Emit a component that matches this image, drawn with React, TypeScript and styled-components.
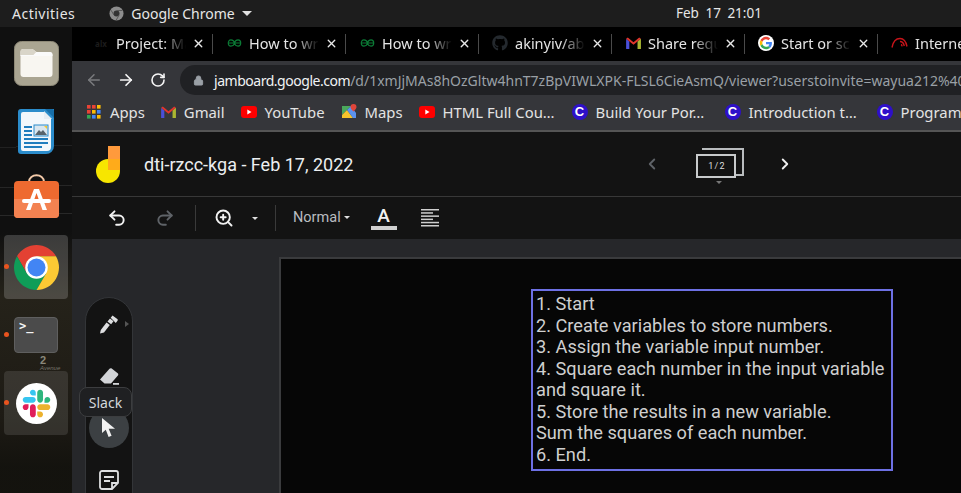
import React from "react";
import styled, { createGlobalStyle } from "styled-components";
import { X, ArrowLeft, ArrowRight, RotateCw, Lock, Undo2, Redo2, ZoomIn, ChevronLeft, ChevronRight } from "lucide-react";
import { FaGithub } from "react-icons/fa";

const Global = createGlobalStyle`
  html, body, #root { margin: 0; height: 100%; overflow: hidden; background: #000; }
  * { box-sizing: border-box; }
`;

const Screen = styled.div`
  display: flex; flex-direction: column; width: 100%; height: 100vh; overflow: hidden;
  font-family: "Noto Sans", "Open Sans", sans-serif;
`;
const TopBar = styled.header`
  flex: 0 0 27px; display: flex; align-items: center; background: #1d1d1d; color: #e6e6e6; font-size: 14px;
  padding-left: 12px; position: relative;
`;
const Activities = styled.span`letter-spacing: .5px;`;
const AppMenu = styled.div`display: flex; align-items: center; gap: 7px; margin-left: 34px;`;
const Clock = styled.div`position: absolute; left: 676px; top: 4px; word-spacing: 3px; font-size: 13.5px;`;
const Caret = styled.span<{ $s?: number; $c?: string }>`
  display: inline-block; width: 0; height: 0;
  border-left: ${p => p.$s ?? 3}px solid transparent; border-right: ${p => p.$s ?? 3}px solid transparent;
  border-top: ${p => p.$s ?? 3}px solid ${p => p.$c ?? "#e0e0e0"};
`;
const Body = styled.div`flex: 1; display: flex; min-height: 0;`;
const Dock = styled.nav`
  flex: 0 0 72px; padding-top: 2px; position: relative; display: flex; flex-direction: column;
  background:
    linear-gradient(180deg, rgba(0,0,0,0) 0 205px, rgba(46,42,30,.7) 270px, rgba(34,30,22,.75) 390px, rgba(20,19,14,.9) 440px),
    linear-gradient(178deg, transparent 0 120px, rgba(255,255,255,.07) 120px 121px, transparent 121px 160px, rgba(255,255,255,.09) 160px 161px, transparent 161px 188px, rgba(255,255,255,.1) 188px 189px, transparent 189px),
    #101010;
`;
const Slot = styled.div<{ $lift?: number }>`
  height: 68px; display: flex; align-items: center; justify-content: center; position: relative; padding-bottom: ${p => p.$lift ?? 0}px;
`;
const Tile = styled.div<{ $dim?: boolean }>`
  width: 64px; height: 64px; border-radius: 4px; background: rgba(255,255,255,${p => (p.$dim ? 0.11 : 0.18)});
  display: flex; align-items: center; justify-content: center;
`;
const RunDot = styled.i`position: absolute; left: 4px; top: 31px; width: 5px; height: 5px; border-radius: 50%; background: #e9541f;`;
const Terminal = styled.div`
  width: 44px; height: 36px; border-radius: 4px; background: #4b4b4b; border: 1px solid #5f5f5f;
  color: #f4f4f4; font: 700 12px/12px "DejaVu Sans Mono", monospace; padding: 2px 0 0 4px;
`;
const Tooltip = styled.div`
  position: absolute; left: 79px; top: 18px; width: 53px; height: 30px; z-index: 5; border-radius: 8px;
  background: #1f2022; border: 1px solid #3c3d3f; color: #d4d8dc; font-size: 14px;
  display: flex; align-items: center; justify-content: center;
`;
const StreetSign = styled.div`
  position: absolute; left: 40px; top: 328px; color: #8a887b; font: 700 11px/10px "Liberation Sans", sans-serif;
  small { display: block; font: italic 6px/7px "Liberation Sans", sans-serif; color: #77756a; }
`;
const Browser = styled.main`flex: 1; min-width: 0; display: flex; flex-direction: column;`;
const TabStrip = styled.div`flex: 0 0 34px; background: #000; display: flex; padding-left: 8px; overflow: hidden;`;
const Tab = styled.div`
  flex: 0 0 133px; display: flex; align-items: center; padding: 0 0 2px 13px; position: relative; gap: 7px; color: #e4e4e4; font-size: 14.5px;
  &::after { content: ""; position: absolute; right: 0; top: 7px; bottom: 7px; width: 1px; background: #4a4a4a; }
`;
const Fav = styled.span`flex: 0 0 16px; height: 16px; display: flex; align-items: center; justify-content: center;`;
const AlxMark = styled.span`color: #1c1c1c; font-size: 8px; font-weight: 700;`;
const TabTitle = styled.span`
  flex: 0 0 70px; white-space: nowrap; overflow: hidden;
  -webkit-mask-image: linear-gradient(90deg, #000 65%, transparent 100%);
  mask-image: linear-gradient(90deg, #000 65%, transparent 100%);
`;
const TabClose = styled(X)`position: absolute; right: 8px; top: 10px; color: #e8e8e8;`;
const Toolbar = styled.div`flex: 0 0 34px; background: #35363a; padding: 4px 0 0 6px; display: flex; overflow: hidden;`;
const NavBtn = styled.div<{ $off?: boolean }>`
  flex: 0 0 32px; height: 30px; display: flex; align-items: center; justify-content: center; color: ${p => (p.$off ? "#7a7b7e" : "#f5f5f5")};
`;
const Pill = styled.div`
  flex: 1; margin-left: 6px; height: 30px; border-radius: 15px 0 0 15px; background: #202124; color: #9aa0a6;
  display: flex; align-items: center; padding-left: 13px; white-space: nowrap; overflow: hidden; font-size: 14px; gap: 10px;
  b { font-weight: 400; color: #f1f3f4; letter-spacing: -.47px; }
`;
const PadLock = styled(Lock)`flex: 0 0 11px;`;
const Bookmarks = styled.div`
  flex: 0 0 35px; background: #35363a; display: flex; align-items: center; gap: 16px; padding: 0 0 2px 15px; color: #e3e3e3; font-size: 14.85px;
  white-space: nowrap; overflow: hidden;
`;
const Mark = styled.div`display: flex; align-items: center; gap: 8px;`;
const MarkText = styled.span<{ $w?: number }>`
  ${p => (p.$w ? `display: inline-block; width: ${p.$w}px;` : "")}
`;
const CIcon = styled.span`
  width: 16px; height: 16px; border-radius: 50%; background: #2e0fc9; display: inline-flex; align-items: center; justify-content: center;
  color: #fff; font: 700 13px/1 "Liberation Sans", sans-serif;
`;
const JamHeader = styled.div`
  flex: 0 0 67px; background: #131313; border-top: 2px solid #555; border-bottom: 1px solid #383838; display: flex; align-items: center; padding-left: 24px;
`;
const JamTitle = styled.h1`margin: 0 0 0 24px; font: 400 18px "Roboto", sans-serif; color: #eceff1;`;
const Pager = styled.div`margin-left: 290px; display: flex; align-items: center; color: #f0f0f0;`;
const PageStack = styled.div`
  width: 46px; height: 32px; margin: 0 34px 0 35px; position: relative;
  color: #ddd; font: 400 9px "Roboto", sans-serif;
  &::before { content: ""; position: absolute; left: 6px; top: 0; width: 40px; height: 24px; border: 2px solid #b9bcbe; border-left: 0; }
`;
const PageFront = styled.div`
  position: absolute; left: 0; top: 6px; width: 40px; height: 24px; background: #131313; border: 2px solid #c8cacc;
  display: flex; align-items: center; justify-content: center; word-spacing: -1px;
`;
const PageCaret = styled.div`position: absolute; left: 20px; top: 33px; line-height: 0;`;
const Tools = styled.div`flex: 0 0 42px; background: #131313; display: flex; align-items: center; color: #f2f2f2; padding-left: 35px;`;
const ToolDivider = styled.i<{ $gap: number }>`width: 1px; height: 26px; background: #3a3a3a; margin-left: ${p => p.$gap}px;`;
const ToolIcon = styled.span<{ $gap: number; $off?: boolean }>`
  display: inline-flex; line-height: 0; margin-left: ${p => p.$gap}px; color: ${p => (p.$off ? "#5f6368" : "inherit")};
`;
const StyleMenu = styled.div`
  display: flex; align-items: center; gap: 3px; font: 400 14.5px "Roboto", sans-serif; color: #b9bcc0; margin: -2px 21px 0 17px;
`;
const ColorA = styled.div`
  width: 26px; height: 24px; text-align: center; color: #f2f2f2; font: 500 19px/19px "Roboto", sans-serif; border-bottom: 4px solid #d0d0d0; margin-right: 24px;
`;
const Stage = styled.section`flex: 1; min-height: 0; background: #26272a; display: flex; overflow: hidden;`;
const Toolbox = styled.div`
  flex: 0 0 48px; height: 240px; margin: 58px 0 0 13px; border-radius: 24px; background: #131313; border: 1px solid #333538;
  display: flex; flex-direction: column; align-items: center; padding-top: 6px; gap: 12px;
`;
const ToolSlot = styled.div<{ $on?: boolean }>`
  flex: 0 0 40px; width: 40px; border-radius: 50%; display: flex; align-items: center; justify-content: center; background: ${p => (p.$on ? "#3c4043" : "none")}; position: relative;
`;
const PenCaret = styled.i`position: absolute; right: 0; top: 17px; width: 0; height: 0; border-left: 4px solid #555; border-top: 3px solid transparent; border-bottom: 3px solid transparent;`;
const Board = styled.div`
  flex: 1; margin: 18px 0 0 146px; background: #060606; border-top: 2px solid #3a3b3d; border-left: 2px solid #3a3b3d; padding: 30px 0 0 250px;
`;
const TextBox = styled.div`
  width: 362px; height: 182px; border: 2px solid #6d70e4; padding: 2px 0 0 3px; color: #cfcfcf; font: 400 18.2px/21.55px "Roboto", sans-serif;
`;

const Gfg = () => (
  <svg width="15" height="8" viewBox="0 0 16 9" fill="none" stroke="#0b7a35" strokeWidth="1.300">
    <path d="M8 4.500H.8M8 4.500h7.200M8 4.500C7.500 2 6 1 4 1S1 2.500 1 4.500 2 8 4 8s3.500-1 4-3.500zM8 4.500C8.500 2 10 1 12 1s3 1.500 3 3.500S14 8 12 8s-3.500-1-4-3.500z" />
  </svg>
);
const Gmail = () => (
  <svg width="15" height="12" viewBox="0 0 16 13">
    <path d="M0 2v11h3.500V5z" fill="#4a4fd8" />
    <path d="M16 2v11h-3.500V5z" fill="#7db43a" />
    <path d="M0 2 1.800.6 8 5.600 14.200.6 16 2 8 8.500z" fill="#e0352c" />
    <path d="M12.500 13V5L16 2v11z" fill="#c9b52c" opacity=".6" />
  </svg>
);
const GoogleG = ({ size = 16 }: { size?: number }) => (
  <svg width={size} height={size} viewBox="-7 -7 62 62">
    <circle cx="24" cy="24" r="31" fill="#fff" />
    <path fill="#EA4335" d="M24 9.500c3.540 0 6.710 1.220 9.210 3.600l6.850-6.850C35.900 2.380 30.470 0 24 0 14.620 0 6.510 5.380 2.560 13.220l7.980 6.190C12.430 13.720 17.740 9.500 24 9.500z" />
    <path fill="#4285F4" d="M46.980 24.550c0-1.570-.15-3.090-.38-4.550H24v9.020h12.940c-.58 2.960-2.260 5.480-4.780 7.180l7.730 6c4.510-4.180 7.090-10.360 7.090-17.650z" />
    <path fill="#FBBC05" d="M10.530 28.590c-.48-1.450-.76-2.990-.76-4.590s.27-3.140.76-4.590l-7.980-6.190C.92 16.460 0 20.120 0 24c0 3.880.92 7.540 2.560 10.780l7.970-6.190z" />
    <path fill="#34A853" d="M24 48c6.480 0 11.930-2.130 15.890-5.810l-7.730-6c-2.150 1.450-4.920 2.300-8.160 2.300-6.260 0-11.570-4.220-13.470-9.910l-7.980 6.190C6.510 42.620 14.620 48 24 48z" />
  </svg>
);
const Gauge = () => (
  <svg width="17" height="12" viewBox="0 0 17 12" fill="none" stroke="#c8141a" strokeWidth="1.400">
    <path d="M1 10.500C2 5 5 1.500 9 1.500c3 0 6 3 7 8" />
    <path d="M9 4.500c2.500 0 3.800 2 4.300 4.500M10 7.500c.8.300 1 1 1.200 1.800" />
  </svg>
);
const AppsGrid = () => (
  <svg width="15" height="14" viewBox="0 0 15 14">
    {["#ea4335", "#ea4335", "#fbbc05", "#ea4335", "#fbbc05", "#4285f4", "#34a853", "#4285f4", "#fbbc05"].map((c, i) => (
      <rect key={i} x={(i % 3) * 5} y={Math.floor(i / 3) * 5} width="3.600" height="3.600" fill={c} />
    ))}
  </svg>
);
const YouTube = () => (
  <svg width="16" height="12" viewBox="0 0 16 12">
    <rect width="16" height="12" rx="3" fill="#f00" />
    <path d="M6.300 3.500v5L10.500 6z" fill="#fff" />
  </svg>
);
const Maps = () => (
  <svg width="16" height="16" viewBox="0 0 16 16">
    <path d="M1 2h9l-9 9z" fill="#4aa85c" />
    <path d="M1 11l5-5 6 8H1z" fill="#f6c42c" />
    <path d="M6 6l4-4 5 7v5h-3z" fill="#5b92ee" />
    <path d="M12.500 0a3 3 0 0 0-3 3c0 2 3 4.500 3 4.500s3-2.500 3-4.500a3 3 0 0 0-3-3z" fill="#e0453a" />
  </svg>
);
const ChromeLogo = ({ size }: { size: number }) => (
  <svg width={size} height={size} viewBox="4 4 40 40">
    <path fill="#e34133" d="M6.680 14A20 20 0 0 1 41.320 14H24V24L15.340 29z" />
    <path fill="#0f9d58" d="M24 44A20 20 0 0 1 6.680 14L15.340 29 24 24l8.660 5z" />
    <path fill="#fcc934" d="M41.320 14A20 20 0 0 1 24 44l8.660-15L24 24V14z" />
    <circle cx="24" cy="24" r="10" fill="#fff" />
    <circle cx="24" cy="24" r="8" fill="#4285f4" />
  </svg>
);
const GreyChrome = () => (
  <svg width="15" height="15" viewBox="0 0 16 16">
    <circle cx="8" cy="8" r="7.500" fill="#8d8d8d" />
    <circle cx="8" cy="8" r="3.200" fill="#333" />
    <path d="M8 4.800h6.300M5.200 9.600 2.200 4.500M10.800 9.600 7.700 15" stroke="#555" strokeWidth="1" />
  </svg>
);
const Files = () => (
  <svg width="45" height="45" viewBox="0 0 45 45">
    <rect x=".5" y=".5" width="44" height="44" rx="7" fill="#aaa592" stroke="#8f8a78" />
    <path d="M6.500 11a3 3 0 0 1 3-3h9l4 3h13a3 3 0 0 1 3 3V33a3 3 0 0 1-3 3h-26a3 3 0 0 1-3-3z" fill="#f8f6f1" />
    <path d="M6.500 11a3 3 0 0 1 3-3h9l4 3 -3 3h-13z" fill="#d9d5c9" />
    <path d="M6.500 14h13l3-3h13a3 3 0 0 1 3 3v1h-32z" fill="#fafafa" />
  </svg>
);
const Writer = () => (
  <svg width="36" height="45" viewBox="0 0 36 45">
    <path d="M3 0h33v37a8 8 0 0 1-8 8H3a3 3 0 0 1-3-3V3a3 3 0 0 1 3-3z" fill="#2b8ccb" />
    <path d="M5 3h21l7 7v28a4 4 0 0 1-4 4H5a2 2 0 0 1-2-2V5a2 2 0 0 1 2-2z" fill="#f2f7fb" />
    <path d="M27 0h7a2 2 0 0 1 2 2v7z" fill="#176ea8" />
    <path d="M26 2l8 8h-8z" fill="#e6edf3" />
    <rect x="16" y="16" width="14" height="11" fill="#d9e6ef" stroke="#2b8ccb" />
    <path d="M17 26l4-5 2 2 2-2 4 5z" fill="#57636b" />
    <path d="M26 17h3v3z" fill="#f3c72f" />
    <path d="M6 17h8v2H6zM6 21h8v2H6zM6 25h8v2H6zM6 29h24v2H6zM6 33h24v2H6zM6 37h18v2H6z" fill="#1f7dbe" />
  </svg>
);
const Store = () => (
  <svg width="45" height="44" viewBox="0 0 45 44">
    <path d="M15 8c0-9 15-9 15 0" fill="none" stroke="#f2c9a8" strokeWidth="2" />
    <rect y="7" width="45" height="37" rx="4" fill="#ee6a30" />
    <path d="M0 25h45v15a4 4 0 0 1-4 4H4a4 4 0 0 1-4-4z" fill="#f38251" />
    <path d="M20 15h5L33 36h-4.500L22.500 19 16.500 36H12z" fill="#fff" />
    <rect x="8" y="25" width="29" height="4" rx="2" fill="#fff" />
  </svg>
);
const Slack = () => (
  <svg width="41" height="41" viewBox="-30 -30 182.800 182.800">
    <circle cx="61.400" cy="61.400" r="91.400" fill="#fff" />
    <path fill="#e01e5a" d="M25.800 77.600c0 7.100-5.800 12.900-12.900 12.900S0 84.700 0 77.600s5.800-12.900 12.900-12.900h12.900v12.900zm6.500 0c0-7.100 5.800-12.900 12.900-12.900s12.900 5.800 12.900 12.900v32.300c0 7.100-5.800 12.900-12.900 12.900s-12.900-5.800-12.900-12.900V77.600z" />
    <path fill="#36c5f0" d="M45.200 25.800c-7.100 0-12.900-5.800-12.900-12.900S38.100 0 45.200 0s12.900 5.800 12.900 12.900v12.900H45.200zm0 6.500c7.100 0 12.900 5.800 12.900 12.900s-5.800 12.900-12.900 12.900H12.900C5.800 58.100 0 52.300 0 45.200s5.800-12.900 12.900-12.900h32.300z" />
    <path fill="#2eb67d" d="M97 45.200c0-7.100 5.800-12.900 12.900-12.900s12.900 5.800 12.900 12.900-5.800 12.900-12.900 12.900H97V45.200zm-6.500 0c0 7.100-5.800 12.900-12.900 12.900s-12.900-5.800-12.900-12.900V12.900C64.700 5.800 70.500 0 77.600 0s12.900 5.800 12.900 12.900v32.300z" />
    <path fill="#ecb22e" d="M77.600 97c7.100 0 12.900 5.800 12.900 12.900s-5.800 12.900-12.900 12.900-12.900-5.800-12.900-12.900V97h12.900zm0-6.500c-7.100 0-12.900-5.800-12.900-12.900s5.800-12.900 12.900-12.900h32.300c7.100 0 12.900 5.800 12.900 12.900s-5.800 12.900-12.900 12.900H77.600z" />
  </svg>
);
const JamLogo = () => (
  <svg width="24" height="37" viewBox="0 0 24 37">
    <circle cx="12" cy="25" r="12" fill="#f7e600" />
    <rect x="12" y="0" width="12" height="24" fill="#ff9a3c" />
    <path d="M12 13h12v11H12z" fill="#ffab1a" />
  </svg>
);
const Pen = () => (
  <svg width="20" height="20" viewBox="0 0 20 20" fill="#dedfe1">
    <path d="M1 19.500l.8-3.500 5.700-7.500 3.300 2.500-5.800 7.500z" />
    <path d="M8.500 7.500 11 4.500l3.500 2.800-2.400 3z" />
    <path d="M11.700 3.800 13.500 1.500l4.800 3.500c.6.500.7 1.200.2 1.800l-1.700 2.200z" />
  </svg>
);
const Eraser = () => (
  <svg width="21" height="20" viewBox="0 0 21 20" fill="#d3d5d8">
    <path d="M1 13.500 10.500 2.800c.6-.7 1.500-.8 2.200-.2l6 4.600c.7.500.8 1.500.2 2.200L12 17.500H5.500z" />
    <rect x="14" y="17" width="6" height="1.800" />
  </svg>
);
const Arrow = () => (
  <svg width="16" height="20" viewBox="0 0 16 20" fill="#f2f2f2">
    <path d="M1 0v15l3.800-3.300L7.600 19l3-1.200-2.900-7H14z" />
  </svg>
);
const Note = () => (
  <svg width="20" height="20" viewBox="0 0 20 20" fill="none" stroke="#dedfe1" strokeWidth="1.800">
    <path d="M3 1h14a2 2 0 0 1 2 2v10l-6 6H3a2 2 0 0 1-2-2V3a2 2 0 0 1 2-2zM5 7h10M5 11h6M13 19v-6h6" />
  </svg>
);
const AlignIcon = () => (
  <svg width="18" height="18" viewBox="0 0 18 18" fill="#cfcfcf">
    {[18, 12, 18, 12, 18, 18].map((w, i) => (
      <rect key={i} y={i * 3.2} width={w} height="1.500" />
    ))}
  </svg>
);

const tabs: { fav: React.ReactNode; title: string }[] = [
  { fav: <AlxMark>alx</AlxMark>, title: "Project: Mathematics" },
  { fav: <Gfg />, title: "How to write" },
  { fav: <Gfg />, title: "How to write" },
  { fav: <FaGithub size={16} color="#24292e" />, title: "akinyiv/abc" },
  { fav: <Gmail />, title: "Share request" },
  { fav: <GoogleG />, title: "Start or schedule" },
  { fav: <Gauge />, title: "Internet Speed" },
];
const marks: { icon: React.ReactNode; text: string; w?: number }[] = [
  { icon: <AppsGrid />, text: "Apps" },
  { icon: <Gmail />, text: "Gmail" },
  { icon: <YouTube />, text: "YouTube" },
  { icon: <Maps />, text: "Maps" },
  { icon: <YouTube />, text: "HTML Full Cou…", w: 113 },
  { icon: <CIcon>C</CIcon>, text: "Build Your Por…", w: 113 },
  { icon: <CIcon>C</CIcon>, text: "Introduction t…", w: 112 },
  { icon: <CIcon>C</CIcon>, text: "Programming" },
];
const lines = [
  "1. Start",
  "2. Create variables to store numbers.",
  "3. Assign the variable input number.",
  "4. Square each number in the input variable",
  "and square it.",
  "5. Store the results in a new variable.",
  "Sum the squares of each number.",
  "6. End.",
];

export default function App() {
  return (
    <Screen>
      <Global />
      <TopBar>
        <Activities>Activities</Activities>
        <AppMenu>
          <GreyChrome />
          <span>Google Chrome</span>
          <Caret $s={5} />
        </AppMenu>
        <Clock>Feb 17 21:01</Clock>
      </TopBar>
      <Body>
        <Dock>
          <StreetSign>2<small>Avenue</small></StreetSign>
          <Slot><Files /></Slot>
          <Slot><Writer /></Slot>
          <Slot $lift={6}><Store /></Slot>
          <Slot><Tile><ChromeLogo size={45} /></Tile><RunDot /></Slot>
          <Slot><Terminal>&gt;_</Terminal><RunDot /></Slot>
          <Slot><Tile $dim><Slack /></Tile><RunDot /><Tooltip>Slack</Tooltip></Slot>
        </Dock>
        <Browser>
          <TabStrip>
            {tabs.map((t, i) => (
              <Tab key={i}>
                <Fav>{t.fav}</Fav>
                <TabTitle>{t.title}</TabTitle>
                <TabClose size={13} strokeWidth={2.5} />
              </Tab>
            ))}
          </TabStrip>
          <Toolbar>
            <NavBtn $off><ArrowLeft size={18} /></NavBtn>
            <NavBtn><ArrowRight size={18} strokeWidth={2.3} /></NavBtn>
            <NavBtn><RotateCw size={16} strokeWidth={2.4} /></NavBtn>
            <Pill>
              <PadLock size={11} fill="#9aa0a6" />
              <span><b>jamboard.google.com</b>/d/1xmJjMAs8hOzGltw4hnT7zBpVIWLXPK-FLSL6CieAsmQ/viewer?userstoinvite=wayua212%40gmail.com</span>
            </Pill>
          </Toolbar>
          <Bookmarks>
            {marks.map((m, i) => (
              <Mark key={i}>{m.icon}<MarkText $w={m.w}>{m.text}</MarkText></Mark>
            ))}
          </Bookmarks>
          <JamHeader>
            <JamLogo />
            <JamTitle>dti-rzcc-kga - Feb 17, 2022</JamTitle>
            <Pager>
              <ChevronLeft size={18} color="#5f6368" strokeWidth={2.5} />
              <PageStack>
                <PageFront>1 / 2</PageFront>
                <PageCaret><Caret $s={3} $c="#777" /></PageCaret>
              </PageStack>
              <ChevronRight size={18} strokeWidth={2.5} />
            </Pager>
          </JamHeader>
          <Tools>
            <ToolIcon $gap={0}><Undo2 size={20} strokeWidth={2.3} /></ToolIcon>
            <ToolIcon $gap={28} $off><Redo2 size={20} strokeWidth={2.3} /></ToolIcon>
            <ToolDivider $gap={20} />
            <ToolIcon $gap={18}><ZoomIn size={20} strokeWidth={2.3} /></ToolIcon>
            <ToolIcon $gap={18}><Caret $s={3} /></ToolIcon>
            <ToolDivider $gap={17} />
            <StyleMenu>Normal <Caret $s={3} /></StyleMenu>
            <ColorA>A</ColorA>
            <AlignIcon />
          </Tools>
          <Stage>
            <Toolbox>
              <ToolSlot><Pen /><PenCaret /></ToolSlot>
              <ToolSlot><Eraser /></ToolSlot>
              <ToolSlot $on><Arrow /></ToolSlot>
              <ToolSlot><Note /></ToolSlot>
            </Toolbox>
            <Board>
              <TextBox>{lines.map((l, i) => <div key={i}>{l}</div>)}</TextBox>
            </Board>
          </Stage>
        </Browser>
      </Body>
    </Screen>
  );
}
